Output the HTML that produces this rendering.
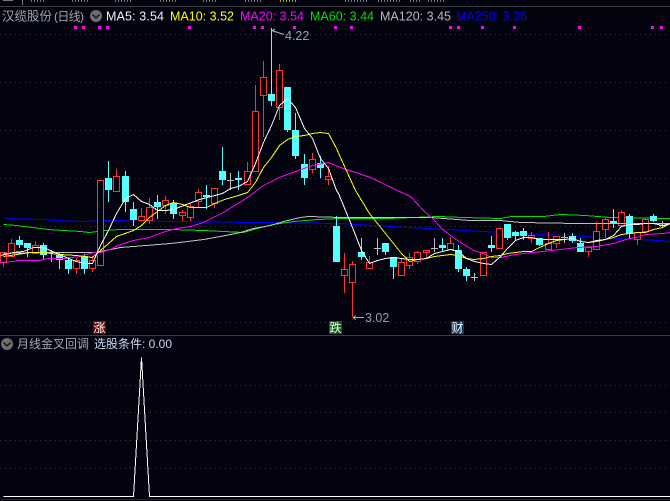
<!DOCTYPE html>
<html><head><meta charset="utf-8"><title>汉缆股份</title>
<style>
html,body{margin:0;padding:0;background:#03030f;width:670px;height:501px;overflow:hidden}
svg{display:block}
text{font-family:"Liberation Sans","Noto Sans CJK SC",sans-serif;font-size:12.5px}
.l{fill:none;stroke-width:1;shape-rendering:crispEdges}
</style></head><body>
<svg width="670" height="501" viewBox="0 0 670 501" xmlns="http://www.w3.org/2000/svg">
<rect width="670" height="501" fill="#03030f"/>
<!-- top fragments -->
<g stroke="#777" stroke-width="2" stroke-dasharray="1 2" fill="none" shape-rendering="crispEdges">
<path d="M31 1H45M72 1H88M115 1H133M160 1H176M203 1H217M245 1H263M345 1H367M378 1H400M410 1H420M428 1H445"/>
</g>
<path d="M280 1H298" stroke="#a0a000" stroke-width="2" stroke-dasharray="1 2" fill="none" shape-rendering="crispEdges"/>
<path d="M3 .5H13M22.500 0V5" stroke="#777" fill="none" shape-rendering="crispEdges"/>
<rect x="0" y="6" width="670" height="1" fill="#3c3c3c"/>
<!-- grid -->
<g stroke="#3a3a3a" stroke-width="1" stroke-dasharray="1 4" shape-rendering="crispEdges">
<path d="M0 34.500H670M0 82.500H670M0 130.500H670M0 178.500H670M0 226.500H670M0 274.500H670M0 322.500H670M0 385.500H670M0 412.500H670M0 440.500H670M0 468.500H670"/>
</g>
<!-- magenta markers -->
<path fill="#ff00ff" shape-rendering="crispEdges" d="M74 26h3v3h-3zM82 26h3v3h-3zM98 26h3v3h-3zM106 26h3v3h-3zM188 26h3v3h-3zM253 26h3v3h-3zM261 26h3v3h-3zM293 26h3v3h-3zM334 26h3v3h-3zM350 26h3v3h-3zM449 26h3v3h-3zM457 26h3v3h-3zM481 26h3v3h-3zM513 26h3v3h-3zM578 26h3v3h-3zM651 26h3v3h-3zM660 26h3v3h-3z"/>
<g transform="translate(.5 .5)">
<polyline class="l" stroke="#0000ff" points="3,217 8,218 40,219 57,220 81,221 110,220 170,221 340,223 373,225 407,227 447,229 500,232 543,234 583,236 617,238 658,240 670,241"/>
<polyline class="l" stroke="#00e000" points="3,224 16,225 32,227 48,229 63,230 80,231 89,232 97,231 104,230 120,229 145,229 170,229 203,230 243,232 257,228 273,224 293,221 317,219 340,218 388,218 438,216 463,217 500,218 511,216 543,216 560,214 585,215 610,217 670,218"/>
</g>
<!-- cyan wicks -->
<path fill="none" stroke="#54ffff" shape-rendering="crispEdges" d="M19.500 236V248M27.500 243V257M43.500 243V259M59.500 253V269M68.500 257V274M84.500 254V274M108.500 161V202M125.500 171V212M133.500 202V226M157.500 195V219M173.500 200V219M206.500 185V209M222.500 147V185M238.500 171V190M271.500 28V106M287.500 87V132M295.500 113V159M304.500 154V185M320.500 156V178M336.500 216V262M361.500 238V260M385.500 243V255M393.500 257V279M442.500 238V252M458.500 245V272M466.500 267V281M491.500 236V252M507.500 224V240M515.500 231V241M523.500 228V240M539.500 238V246M572.500 233V243M580.500 238V252M613.500 209V228M629.500 214V238M653.500 214V222"/>
<!-- cyan bodies -->
<path fill="#54ffff" shape-rendering="crispEdges" d="M16 240h7v5h-7zM24 243h7v5h-7zM40 245h7v10h-7zM56 255h7v5h-7zM65 260h7v9h-7zM81 256h7v13h-7zM105 178h7v12h-7zM122 176h7v26h-7zM130 209h7v11h-7zM154 202h7v5h-7zM170 203h7v11h-7zM203 195h7v2h-7zM219 171h7v9h-7zM235 178h7v2h-7zM268 94h7v7h-7zM284 87h7v43h-7zM292 130h7v26h-7zM301 164h7v14h-7zM317 163h7v5h-7zM333 226h7v36h-7zM358 252h7v5h-7zM382 243h7v9h-7zM390 257h7v10h-7zM439 245h7v3h-7zM455 250h7v19h-7zM463 269h7v7h-7zM488 245h7v3h-7zM504 224h7v14h-7zM512 232h7v4h-7zM520 231h7v5h-7zM536 238h7v7h-7zM569 236h7v5h-7zM577 243h7v9h-7zM610 221h7v3h-7zM626 216h7v18h-7zM650 216h7v5h-7z"/>
<!-- grey dojis -->
<path fill="none" stroke="#c0c0c0" shape-rendering="crispEdges" d="M51.500 250V262M48 252.500h7M230.500 173V190M227 180.500h7M377.500 238V255M374 248.500h7M434.500 238V252M431 248.500h7M474.500 273V281M471 277.500h7M564.500 233V243M561 237.500h7M662.500 221V228M659 225.500h7"/>
<!-- red candles -->
<path fill="#03030f" stroke="#ff3232" shape-rendering="crispEdges" d="M3.500 262V267M.5 252.500h6v10h-6zM11.500 239V243M11.500 256V257M8.500 243.500h6v13h-6zM35.500 241V245M32.500 245.500h6v8h-6zM76.500 258V260M76.500 268V274M73.500 260.500h6v8h-6zM92.500 256V260M92.500 268V272M89.500 260.500h6v8h-6zM97.500 180.500h6v85h-6zM116.500 169V176M116.500 191V192M113.500 176.500h6v15h-6zM141.500 208V216M138.500 216.500h6v4h-6zM149.500 198V207M149.500 220V224M146.500 207.500h6v13h-6zM165.500 196V200M165.500 205V214M162.500 200.500h6v5h-6zM182.500 210V212M182.500 215V221M179.500 212.500h6v3h-6zM190.500 203V206M190.500 217V221M187.500 206.500h6v11h-6zM198.500 189V192M198.500 201V208M195.500 192.500h6v9h-6zM214.500 203V208M211.500 188.500h6v15h-6zM247.500 162V171M244.500 171.500h6v13h-6zM255.500 85V111M252.500 111.500h6v60h-6zM263.500 61V77M263.500 95V137M260.500 77.500h6v18h-6zM279.500 64V70M279.500 107V120M276.500 70.500h6v37h-6zM312.500 153V159M312.500 169V173M309.500 159.500h6v10h-6zM328.500 166V176M328.500 179V185M325.500 176.500h6v3h-6zM344.500 253V269M344.500 275V293M341.500 269.500h6v6h-6zM352.500 261V264M352.500 282V317M349.500 264.500h6v18h-6zM369.500 256V262M369.500 268V269M366.500 262.500h6v6h-6zM401.500 258V262M398.500 262.500h6v13h-6zM409.500 253V257M409.500 265V269M406.500 257.500h6v8h-6zM417.500 251V252M417.500 261V264M414.500 252.500h6v9h-6zM426.500 252V258M423.500 250.500h6v2h-6zM450.500 237V243M450.500 249V250M447.500 243.500h6v6h-6zM480.500 252.500h6v23h-6zM496.500 228.500h6v20h-6zM531.500 232V235M531.500 238V243M528.500 235.500h6v3h-6zM548.500 232V243M545.500 243.500h6v6h-6zM556.500 243V248M553.500 236.500h6v7h-6zM588.500 246V247M588.500 251V257M585.500 247.500h6v4h-6zM596.500 222V231M596.500 249V250M593.500 231.500h6v18h-6zM605.500 217V219M605.500 229V238M602.500 219.500h6v10h-6zM621.500 210V212M621.500 225V226M618.500 212.500h6v13h-6zM637.500 239V245M634.500 232.500h6v7h-6zM645.500 218V219M645.500 231V232M642.500 219.500h6v12h-6z"/>
<g transform="translate(.5 .5)">
<polyline class="l" stroke="#c0c0c0" points="3,253 33,252 97,252 100,251 120,247 133,246 170,243 187,241 203,239 220,236 240,232 253,228 270,225 283,221 300,217 308,216 340,217 430,217 470,220 500,220 520,222 577,223 670,223"/>
<polyline class="l" stroke="#ff00ff" points="0,262 13,261 17,260 39,260 47,258 63,258 80,256 93,252 100,252 110,249 117,245 133,240 149,237 165,231 176,228 190,226 203,222 223,212 247,197 263,185 279,177 295,171 312,165 328,162 340,167 370,177 397,190 410,196 423,210 434,220 442,229 457,240 473,250 483,253 491,257 500,257 515,254 531,252 543,251 560,249 577,247 596,246 613,243 629,238 637,237 645,234 662,233 670,232"/>
<polyline class="l" stroke="#ffff00" points="3,256 30,252 43,252 59,254 76,255 84,256 92,257 100,250 116,236 133,230 141,225 149,217 165,205 173,202 182,204 190,207 198,207 206,207 214,203 224,199 238,195 247,192 255,182 263,167 271,157 279,145 287,139 295,136 304,135 312,133 320,132 328,133 336,148 340,157 355,190 369,213 385,233 401,253 409,261 417,259 426,258 434,256 442,255 450,254 458,255 466,258 474,259 483,258 491,256 500,255 507,253 515,252 523,251 531,251 539,247 548,243 556,240 564,239 572,238 580,241 588,242 596,241 605,239 613,237 621,234 629,233 637,232 645,232 653,229 662,227 670,223"/>
<polyline class="l" stroke="#ffffff" points="0,255 13,252 23,251 33,247 43,247 52,251 59,254 68,258 76,261 84,263 92,263 100,245 108,230 116,213 125,198 133,194 141,201 149,204 157,210 165,210 173,209 199,199 222,193 230,188 238,186 247,181 255,163 263,142 271,125 279,105 287,98 295,107 304,128 312,138 320,158 328,168 336,190 338,193 352,227 361,250 369,263 377,260 385,258 393,257 401,258 409,259 417,259 426,258 434,253 442,251 450,249 458,251 466,258 474,261 483,263 491,264 499,257 507,248 515,240 523,237 531,237 539,239 548,239 556,239 564,239 572,238 580,241 588,242 596,240 605,239 613,235 621,226 629,224 637,224 645,223 653,223 662,225 670,223"/>
</g>
<!-- extreme labels -->
<path fill="none" stroke="#b0b0b0" d="M272 30.500L284 34.500M272 30.500l3 -1.500M272 30.500l3 1.500"/>
<text x="285" y="40" fill="#9aa0a8">4.22</text>
<path fill="none" stroke="#b0b0b0" d="M353 317.500H364M353 317.500l3 -2M353 317.500l3 2"/>
<text x="365" y="322" fill="#9aa0a8">3.02</text>
<!-- tags -->
<rect x="93" y="321" width="13" height="13" fill="#6e0808"/>
<text x="93.500" y="332" fill="#ffffff" style="font-size:12px">涨</text>
<rect x="329" y="321" width="13" height="13" fill="#086008"/>
<text x="329.500" y="332" fill="#ffffff" style="font-size:12px">跌</text>
<rect x="451" y="321" width="13" height="13" fill="#0e3864"/>
<text x="451.500" y="332" fill="#ffffff" style="font-size:12px">财</text>
<!-- header legend -->
<text x="2" y="20.500" fill="#a0a8b0" style="font-size:12.500px">汉缆股份</text>
<text x="54" y="20.500" fill="#a0a8b0" style="font-size:12px" textLength="30" lengthAdjust="spacing">(日线)</text>
<circle cx="96" cy="16" r="6" fill="#6e6e6e"/>
<path d="M92.500 14.500L96 18L99.500 14.500" fill="none" stroke="#111" stroke-width="1.300"/>
<text x="106" y="20.500" fill="#e8f0ff" textLength="58">MA5: 3.54</text>
<text x="170" y="20.500" fill="#ffff00" textLength="64">MA10: 3.52</text>
<text x="240" y="20.500" fill="#ff00ff" textLength="64">MA20: 3.54</text>
<text x="310" y="20.500" fill="#00e000" textLength="64">MA60: 3.44</text>
<text x="380" y="20.500" fill="#b8b8b8" textLength="71">MA120: 3.45</text>
<text x="456" y="20.500" fill="#0000ff" textLength="71">MA250: 3.36</text>
<!-- divider -->
<rect x="0" y="335" width="670" height="1" fill="#3c3c3c"/>
<!-- lower pane -->
<circle cx="7" cy="344" r="6" fill="#6e6e6e"/>
<path d="M3.500 342.500L7 346L10.500 342.500" fill="none" stroke="#111" stroke-width="1.300"/>
<text x="17" y="348" fill="#a0a8b0" style="font-size:12px">月线金叉回调</text>
<text x="94" y="348" fill="#c8d8f0" style="font-size:12px" textLength="78" lengthAdjust="spacing">选股条件: 0.00</text>
<polyline class="l" stroke="#ffffff" transform="translate(.5 .5)" points="3,496 133,496 141,357 149,496 670,496"/>
<rect x="0" y="499" width="670" height="1" fill="#262626"/>
</svg>
</body></html>
